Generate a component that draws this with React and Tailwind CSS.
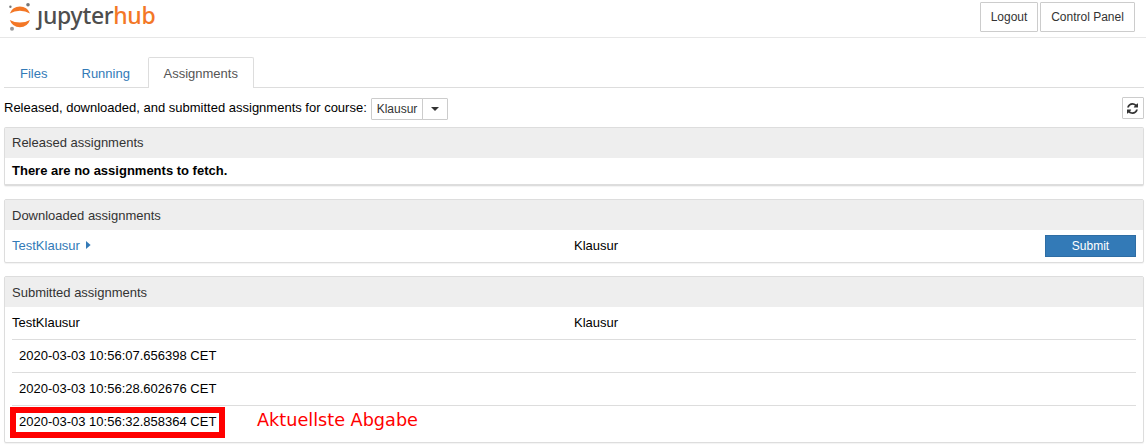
const panelClass =
  "flex flex-col rounded-[2px] border border-[#ddd] bg-white shadow-[0_1px_1px_rgba(0,0,0,0.05)]";

function PanelHeading({ children }) {
  return (
    <div className="h-[30px] shrink-0 bg-[#eee] px-[7px] text-[#333] leading-[30px]">
      {children}
    </div>
  );
}

function Logo() {
  return (
    <div className="flex h-[37px] items-start">
      <svg className="ml-[8px] mt-[2px] h-[30px] w-[24px] shrink-0" viewBox="0 0 24 30">
        <path d="M1.8 11.4A10.9 10.9 0 0 1 22 11.4A18 15 0 0 0 1.8 11.4Z" fill="#f37726" />
        <path d="M1.8 18A10.7 10.7 0 0 0 22 18A18 15 0 0 1 1.8 18Z" fill="#f37726" />
        <circle cx="20" cy="2.8" r="1.8" fill="#767677" />
        <circle cx="2.4" cy="4.8" r="1.2" fill="#767677" />
        <circle cx="4" cy="26.7" r="2" fill="#989798" />
      </svg>
      <div className="ml-[5px] whitespace-nowrap font-['Noto_Sans',sans-serif] text-[23px] font-medium leading-[30px] tracking-[-0.3px] text-[#4e4e4e]">
        <span className="inline-block [clip-path:inset(10px_-4px_-6px_-4px)]">j</span>upyter
        <span className="text-[#f37726]">hub</span>
      </div>
    </div>
  );
}

const submissions = [
  "2020-03-03 10:56:07.656398 CET",
  "2020-03-03 10:56:28.602676 CET",
  "2020-03-03 10:56:32.858364 CET",
];

export default function App() {
  return (
    <div className="h-[446px] w-[1146px] overflow-hidden bg-white font-['Liberation_Sans',Arial,sans-serif] text-[13px] leading-[18px] text-black">
      <header className="flex h-[38px] justify-between border-b border-[#e7e7e7]">
        <Logo />
        <div className="mr-[11px] mt-[2px] flex gap-[2px] text-[12px] text-[#333]">
          <button className="h-[30px] w-[58px] rounded-[1px] border border-[#ccc]">Logout</button>
          <button className="h-[30px] w-[95px] rounded-[1px] border border-[#ccc]">Control Panel</button>
        </div>
      </header>

      <main className="ml-[4px] w-[1140px] pt-[19px]">
        <nav className="flex h-[31px] border-b border-[#ddd] leading-[32px] text-[#337ab7]">
          <a className="w-[62px] pl-[16px] pt-px">Files</a>
          <a className="w-[82px] pl-[15.5px] pt-px">Running</a>
          <a className="h-[31px] w-[106px] rounded-t-[2px] border border-b-0 border-[#ddd] bg-white pl-[14.5px] text-[#555]">
            Assignments
          </a>
        </nav>

        <div className="flex h-[39px] items-start pt-[9px]">
          <span className="mt-[2px] w-[367px] whitespace-nowrap">
            Released, downloaded, and submitted assignments for course:
          </span>
          <div className="mt-[1px] flex h-[22px] text-[12px] leading-[20px] text-[#333]">
            <button className="w-[52px] rounded-l-[1px] border border-[#ccc]">Klausur</button>
            <button className="-ml-px flex w-[26px] items-center justify-center rounded-r-[1px] border border-[#ccc]">
              <svg className="h-[4px] w-[8px]" viewBox="0 0 8 4">
                <path d="M0 0H8L4 4Z" fill="#333" />
              </svg>
            </button>
          </div>
          <button className="ml-auto flex h-[22px] w-[22px] items-center justify-center rounded-[1px] border border-[#ccc]">
            <svg className="mr-px h-[11px] w-[11px]" viewBox="0 0 1536 1536" fill="#333">
              <path d="M1511 928q0 5-1 7-64 268-268 434.5t-478 166.5q-146 0-282.5-55t-243.5-157l-129 129q-19 19-45 19t-45-19-19-45v-448q0-26 19-45t45-19h448q26 0 45 19t19 45-19 45l-137 137q71 66 161 102t187 36q134 0 250-65t186-179q11-17 53-117 8-23 30-23h192q13 0 22.5 9.5t9.5 22.5zm25-800v448q0 26-19 45t-45 19h-448q-26 0-45-19t-19-45 19-45l138-138q-148-137-349-137-134 0-250 65t-186 179q-11 17-53 117-8 23-30 23h-199q-13 0-22.5-9.5t-9.5-22.5v-7q65-268 270-434.5t480-166.5q146 0 284 55.5t245 156.5l130-129q19-19 45-19t45 19 19 45z" />
            </svg>
          </button>
        </div>

        <section className={`${panelClass} mb-[13px] h-[59px] border-b-2`}>
          <PanelHeading>Released assignments</PanelHeading>
          <div className="px-[7px] font-bold leading-[26px]">There are no assignments to fetch.</div>
        </section>

        <section className={`${panelClass} mb-[13px] h-[64px]`}>
          <PanelHeading>
            <span className="block pt-px">Downloaded assignments</span>
          </PanelHeading>
          <div className="flex h-[32px] items-center px-[7px]">
            <a className="flex w-[562px] items-center text-[#337ab7]">
              TestKlausur
              <svg className="mb-[3px] ml-[6px] h-[8px] w-[5px]" viewBox="0 0 5 8">
                <path d="M0 0L4.6 4L0 8Z" fill="#337ab7" />
              </svg>
            </a>
            <span>Klausur</span>
            <button className="ml-auto h-[22px] w-[91px] border border-[#2e6da4] bg-[#337ab7] text-[12px] leading-[20px] text-white">
              Submit
            </button>
          </div>
        </section>

        <section className={`${panelClass} h-[167px]`}>
          <PanelHeading>
            <span className="block pt-px">Submitted assignments</span>
          </PanelHeading>
          <div className="flex h-[32px] items-center px-[7px]">
            <span className="w-[562px]">TestKlausur</span>
            <span>Klausur</span>
          </div>
          <div className="mx-[7px]">
            {submissions.map((time, i) => (
              <div key={time} className="relative h-[33px] border-t border-[#ddd] pl-[7px] leading-[32px]">
                {time}
                {i === submissions.length - 1 && (
                  <>
                    <div className="absolute left-[-2px] top-px h-[31px] w-[215px] border-[6px] border-[#f00]" />
                    <span className="absolute left-[245px] top-[-2px] whitespace-nowrap font-['DejaVu_Sans',sans-serif] text-[17.65px] text-[#f00]">
                      Aktuellste Abgabe
                    </span>
                  </>
                )}
              </div>
            ))}
          </div>
        </section>
      </main>
    </div>
  );
}
